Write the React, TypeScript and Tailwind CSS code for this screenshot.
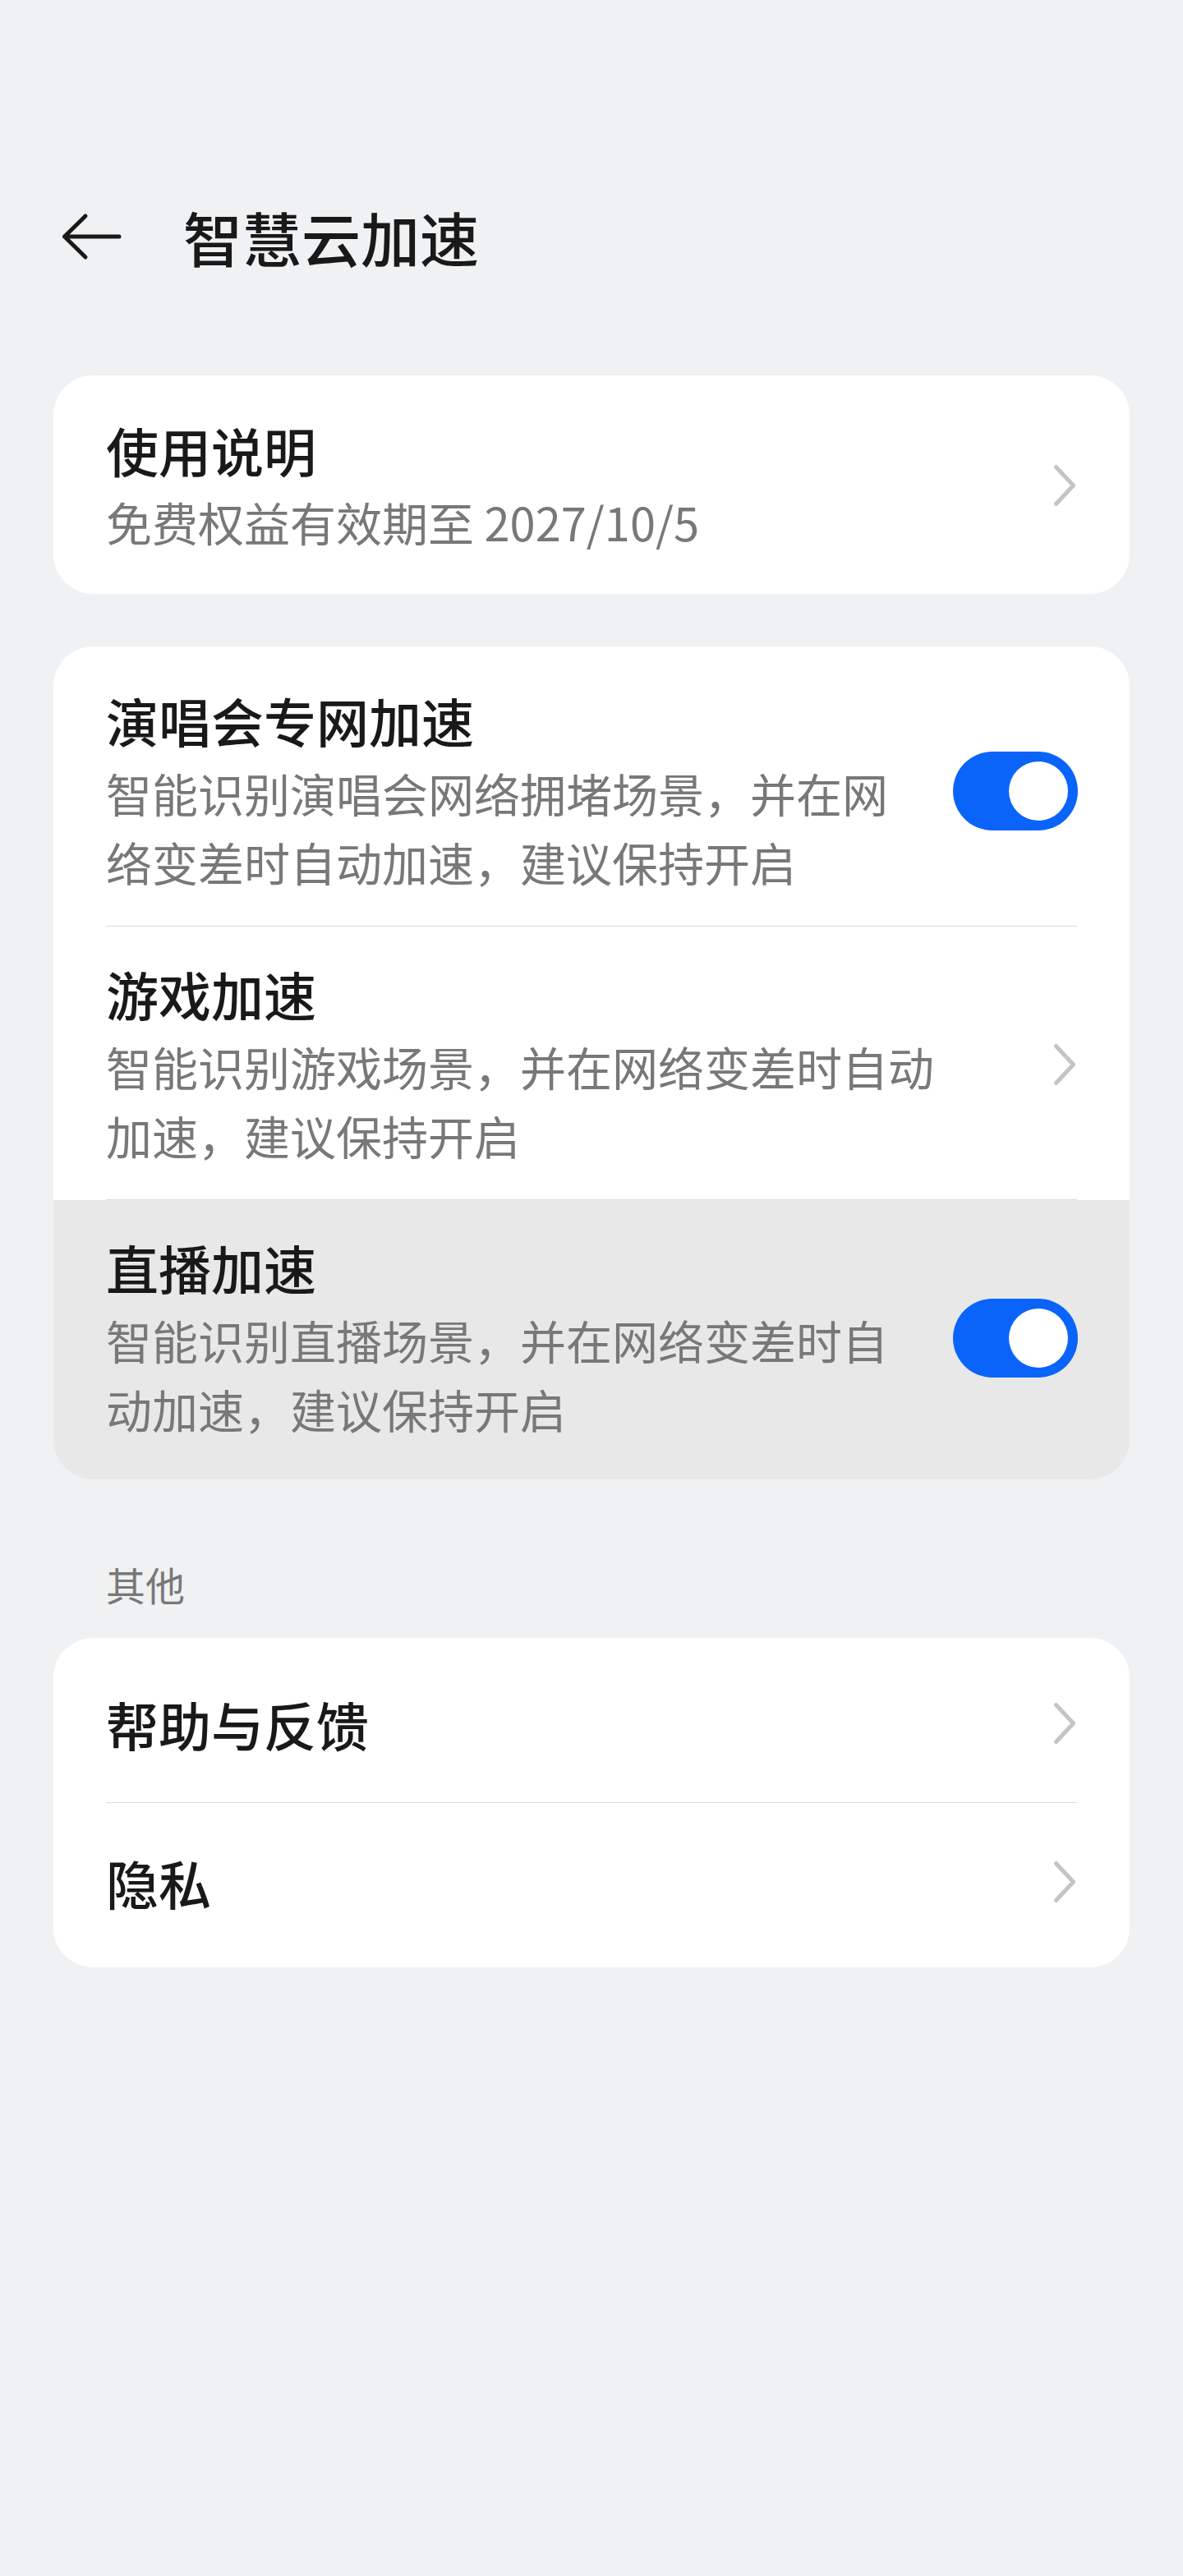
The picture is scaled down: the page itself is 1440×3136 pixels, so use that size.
const font = "font-['Noto_Sans_CJK_SC','Noto_Sans',sans-serif]";

function Chevron() {
  return (
    <svg width="30" height="56" viewBox="0 0 30 56" className="shrink-0">
      <path d="M3.5 5.5 L24.5 28 L3.5 50.5" fill="none" stroke="#c4c4c4" strokeWidth="5" strokeLinecap="round" strokeLinejoin="round" />
    </svg>
  );
}

function Toggle() {
  return (
    <div className="shrink-0 w-[152px] h-[96px] rounded-full bg-[#0a64fa] flex items-center justify-end pr-[12px]">
      <div className="w-[72px] h-[72px] rounded-full bg-white"></div>
    </div>
  );
}

function Divider() {
  return <div className="mx-[64px] h-px bg-[#dcdcdc]"></div>;
}

type Row = { title: string; desc: string; kind: "toggle" | "chevron"; pressed?: boolean };

const rows: Row[] = [
  { title: "演唱会专网加速", desc: "智能识别演唱会网络拥堵场景，并在网络变差时自动加速，建议保持开启", kind: "toggle" },
  { title: "游戏加速", desc: "智能识别游戏场景，并在网络变差时自动加速，建议保持开启", kind: "chevron" },
  { title: "直播加速", desc: "智能识别直播场景，并在网络变差时自动加速，建议保持开启", kind: "toggle", pressed: true },
];

export default function App(): JSX.Element {
  return (
    <div className={`min-h-screen bg-[#f0f1f3] ${font} text-[#191919]`}>
      {/* header */}
      <div className="pt-[240px] h-[336px] flex items-center">
        <svg width="80" height="60" viewBox="0 0 80 60" className="ml-[72px] shrink-0">
          <path d="M6.5 30 L73 30 M32 5 L6.5 30 L32 55" fill="none" stroke="#191919" strokeWidth="5" strokeLinecap="round" strokeLinejoin="round" />
        </svg>
        <h1 className="ml-[71px] text-[72px] leading-[96px] font-medium">智慧云加速</h1>
      </div>

      {/* usage */}
      <div className="mt-[121px] mx-[65px] bg-white rounded-[48px] pl-[64px] pr-[63px] pt-[48px] pb-[46px] flex items-center gap-[120px]">
        <div className="flex-1">
          <div className="text-[64px] leading-[84px] font-medium">使用说明</div>
          <div className="mt-[4px] text-[56px] leading-[84px] text-[#787878]">免费权益有效期至 2027/10/5</div>
        </div>
        <Chevron />
      </div>

      {/* accelerations */}
      <div className="mt-[64px] mx-[65px] bg-white rounded-[48px] overflow-hidden pt-[8px]">
        {rows.map((r, i) => (
          <div key={r.title}>
            {i > 0 && <Divider />}
            <div
              className={`pl-[64px] pr-[63px] pt-[39px] flex items-center ${r.kind === "toggle" ? "gap-[48px]" : "gap-[120px]"} ${r.pressed ? "bg-[#e8e8e8] pb-[44px]" : "pb-[36px]"}`}
            >
              <div className="flex-1">
                <div className="text-[64px] leading-[84px] font-medium">{r.title}</div>
                <div className="mt-[5px] text-[56px] leading-[84px] text-[#787878]">{r.desc}</div>
              </div>
              {r.kind === "toggle" ? <Toggle /> : <Chevron />}
            </div>
          </div>
        ))}
      </div>

      {/* other */}
      <div className="mt-[95px] ml-[129px] text-[48px] leading-[64px] text-[#787878]">其他</div>
      <div className="mt-[34px] mx-[65px] bg-white rounded-[48px] py-[8px]">
        {["帮助与反馈", "隐私"].map((t, i) => (
          <div key={t}>
            {i > 0 && <Divider />}
            <div className="pl-[64px] pr-[63px] py-[54px] flex items-center justify-between">
              <div className="text-[64px] leading-[84px] font-medium">{t}</div>
              <Chevron />
            </div>
          </div>
        ))}
      </div>
    </div>
  );
}
